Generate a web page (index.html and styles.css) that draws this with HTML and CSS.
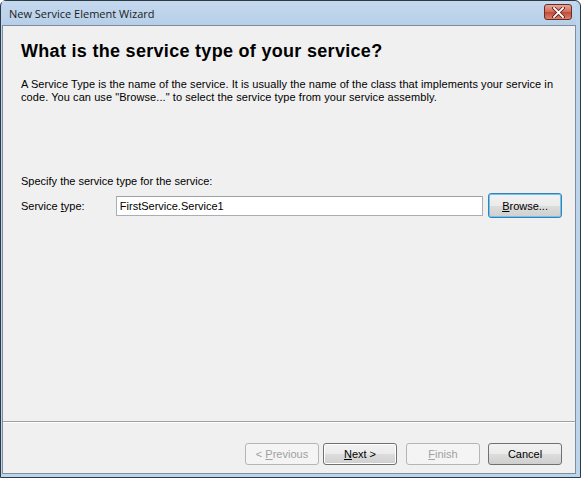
FILE: index.html
```html
<!DOCTYPE html>
<html lang="en">
<head>
    <meta charset="UTF-8">
    <link rel="stylesheet" href="styles.css">
    <title>New Service Element Wizard</title>
</head>
<body>
    <div class="window">
        <div class="titlebar">
            <span class="title">New Service Element Wizard</span>
            <div class="close-btn">
                <svg width="13" height="11" viewBox="0 0 13 11">
                    <path d="M2 1 L11 10 M11 1 L2 10" stroke="#5a1a14" stroke-width="3.4" stroke-linecap="square"/>
                    <path d="M2 1 L11 10 M11 1 L2 10" stroke="#fff" stroke-width="1.8" stroke-linecap="square"/>
                </svg>
            </div>
        </div>
        <div class="client">
            <div class="page">
                <h3 class="heading">What is the service type of your service?</h3>
                <p class="intro">A Service Type is the name of the service. It is usually the name of the class that implements your service in code. You can use "Browse..." to select the service type from your service assembly.</p>

                <div class="spec">Specify the service type for the service:</div>
                <div class="field">
                    <label for="stype">Service <u>t</u>ype:</label>
                    <input type="text" id="stype" value="FirstService.Service1">
                    <button class="btn btn-focus"><u>B</u>rowse...</button>
                </div>
            </div>

            <!-- bottom bar with the wizard buttons -->
            <div class="footer">
                <button class="btn btn-prev" disabled>&lt; <u>P</u>revious</button>
                <button class="btn btn-default"><u>N</u>ext &gt;</button>
                <button class="btn btn-finish" disabled><u>F</u>inish</button>
                <button class="btn btn-cancel">Cancel</button>
            </div>
        </div>
    </div>
</body>
</html>
```

FILE: styles.css
```css
*{
    box-sizing: border-box;
}
html, body{
    margin: 0;
    height: 100%;
}
body{
    font-family: "Liberation Sans", Arial, sans-serif;
    font-size: 11px;
    color: #000;
    background-color: #fff;
}
.window{
    width: 581px;
    height: 478px;
    display: flex;
    flex-direction: column;
    border: 1px solid #2b3a44;
    border-radius: 6px 6px 0 0;
    background: #bcd5ec;
    padding: 0 4px 3px 1px;
}
.titlebar{
    height: 24px;
    display: flex;
    align-items: center;
    justify-content: space-between;
    padding: 0 4px 0 7px;
    background: linear-gradient(#c5d9ee, #b6cfe8);
}
.title{
    font-family: "Open Sans", "DejaVu Sans", sans-serif;
    font-size: 11px;
    color: #1b1b1b;
}
.close-btn{
    width: 28px;
    height: 16px;
    margin-top: -2px;
    border: 1px solid #6b2b25;
    border-radius: 3px;
    background: linear-gradient(#e6a598, #d26b58 50%, #c14a35 51%, #d9826f);
    display: flex;
    align-items: center;
    justify-content: center;
}
.client{
    flex: 1;
    display: flex;
    flex-direction: column;
    background-color: #f0f0f0;
    border: 1px solid #7f8e9a;
}
.page{
    flex: 1;
    padding: 0 13px 0 18px;
}
.heading{
    margin: 15px 0 0;
    font-size: 18px;
    font-weight: bold;
    letter-spacing: 0.3px;
    line-height: 20px;
}
.intro{
    margin: 17px 0 0;
    line-height: 13px;
    letter-spacing: 0.07px;
}
.spec{
    margin-top: 71px;
}
.field{
    display: flex;
    align-items: center;
    margin-top: 6px;
}
.field label{
    width: 95px;
}
.field input{
    width: 368px;
    height: 20px;
    margin: 0 5px 0 0;
    padding: 0 3px;
    border: 1px solid #abadb3;
    border-top-color: #a0a0a0;
    font-family: "Liberation Sans", Arial, sans-serif;
    font-size: 11px;
    background: #fff;
    outline: none;
}
.btn{
    width: 74px;
    height: 22px;
    padding: 0;
    font-family: "Liberation Sans", Arial, sans-serif;
    font-size: 11px;
    color: #000;
    border: 1px solid #707070;
    border-radius: 3px;
    background: linear-gradient(#f2f2f2, #ebebeb 50%, #dddddd 51%, #cfcfcf);
}
.btn-focus{
    height: 25px;
    border-color: #3c7fb1;
    box-shadow: inset 0 0 0 1px #6cc4f2;
}
.btn-default{
    box-shadow: inset 0 0 0 1px #fff;
}
.btn:disabled{
    color: #a0a0a0;
    border-color: #b5b5b5;
    background: #f4f4f4;
    box-shadow: none;
}
.footer{
    height: 52px;
    border-top: 1px solid #a0a0a0;
    box-shadow: inset 0 1px 0 #fff;
    display: flex;
    align-items: flex-end;
    justify-content: flex-end;
    gap: 4px;
    padding: 0 13px 8px 0;
}
.btn-finish{
    margin-left: 5px;
}
.btn-cancel{
    margin-left: 4px;
}
```
